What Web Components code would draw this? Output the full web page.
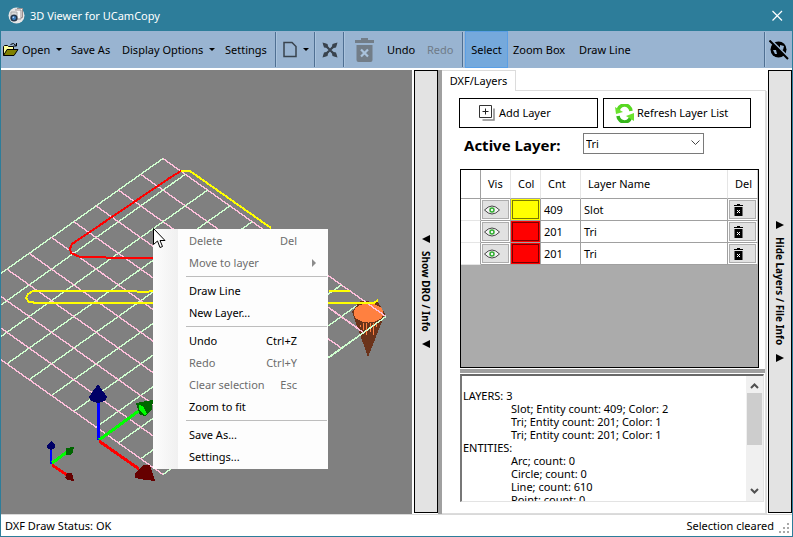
<!DOCTYPE html>
<html lang="en">
<head>
<meta charset="utf-8">
<title>3D Viewer for UCamCopy</title>
<style>
html,body{margin:0;height:100%}
body{font:11px/16px "Noto Sans","Open Sans",sans-serif;color:#000;background:#fff}
</style>
</head>
<body>
<viewer-window></viewer-window>
<script>
const define = (name, css, html, setup) => {
  const t = document.createElement('template');
  t.innerHTML = `<style>*{box-sizing:border-box}button{font:inherit;color:inherit;margin:0;padding:0;border:0;background:none}svg{display:block;flex:none}${css}</style>${html}`;
  customElements.define(name, class extends HTMLElement {
    constructor() {
      super();
      this.attachShadow({mode: 'open'}).append(t.content.cloneNode(true));
    }
    connectedCallback() { if (setup) setup(this, this.shadowRoot); }
  });
};

define('title-bar', `
:host{display:flex;align-items:center;gap:5px;height:31px;padding:0 7px;background:#2d7d9a;color:#fff;box-sizing:border-box}
h1{font:inherit;margin:0;flex:1}
button{width:16px;height:16px}`, `
<svg width="17" height="17" viewBox="0 0 17 17"><circle cx="8.500" cy="8.500" r="8" fill="#e6e6e6"/><path d="M7 3h6v9H9M9 1.500h5.500v9H13" fill="#f7f7f7" stroke="#9a8f8f"/><path d="M3 5h6v7H3z" fill="#ddd" stroke="#aaa"/><circle cx="6" cy="11" r="3.600" fill="#24364a"/><circle cx="6" cy="11" r="2" fill="#3d7fc0"/><circle cx="5.300" cy="10.300" r=".8" fill="#cdf"/></svg>
<h1><slot></slot></h1>
<button aria-label="Close"><svg width="16" height="16" viewBox="0 0 16 16"><path d="M3.500 3l9.500 9.500M13 3L3.500 12.500" stroke="#fff" stroke-width="1.200"/></svg></button>`);

define('tool-button', `
:host{display:flex}
button{display:flex;align-items:center;gap:3px;width:100%;height:37px;border:1px solid transparent;white-space:nowrap}
:host([selected]) button{background:#75a9dc;border-color:#5a9fe5}
:host([selected]) button,:host([center]) button{justify-content:center}
:host([disabled]) button{color:#6f7b88}
i{display:none;margin-left:3px;border:3px solid transparent;border-top-color:#000;border-bottom:0}
:host([menu]) i{display:block}`, `<button><slot></slot><i></i></button>`, (h, r) => {
  if (h.hasAttribute('disabled')) r.querySelector('button').disabled = true;
  if (h.title) r.querySelector('button').setAttribute('aria-label', h.title);
});

define('tool-bar', `
:host{display:flex;align-items:center;height:37px;background:#99b4d1}
hr{margin:0;width:2px;height:35px;border:0;border-left:1px solid #4f6f92;border-right:1px solid #aac3dd}
.space{flex:1}`, `
<tool-button menu style="width:69px"><svg width="17" height="16" viewBox="0 0 17 16"><path d="M1.500 13.500v-9l1-1h3l1 1h5v3" fill="#ffff9c" stroke="#000"/><path d="M1.500 13.500l3.500-6h11l-4 6z" fill="#808000" stroke="#000"/><path d="M8.500 2.500q3-2.500 5.500 1M14.500 1v3h-3" fill="none" stroke="#000"/></svg>Open</tool-button>
<tool-button style="width:51px">Save As</tool-button>
<tool-button menu style="width:103px">Display Options</tool-button>
<tool-button style="width:51px">Settings</tool-button>
<hr>
<tool-button menu center title="New" style="width:37px"><svg width="14" height="17" viewBox="0 0 14 17"><path d="M1 1.500h8l4 4v10H1z" fill="none" stroke="#39434e" stroke-width="1.500"/></svg></tool-button>
<hr>
<tool-button center title="Zoom to fit" style="width:27px"><svg width="16" height="16" viewBox="0 0 16 16"><path d="M2 2l12 12M14 2L2 14" stroke="#39434e" stroke-width="2.200"/><path d="M.5 .5L5.500 2 6.500 6 2 5.500zM15.500 .5L14 5.500 9.500 6.500 10.500 2zM.5 15.500L2 10.500 6.500 9.500 5.500 14zM15.500 15.500L10.500 14 9.500 9.500 14 10.500z" fill="#39434e"/></svg></tool-button>
<hr>
<tool-button center disabled title="Delete" style="width:39px"><svg width="19" height="24" viewBox="0 0 19 24"><path d="M0 2h6V0h7v2h6v3H0zM1.500 7h16v15q0 2-2 2h-12q-2 0-2-2z" fill="#727d88"/><path d="M6 11.500l7 7M13 11.500l-7 7" stroke="#a9c2dc" stroke-width="2.200"/></svg></tool-button>
<tool-button style="width:40px;margin-left:2px">Undo</tool-button>
<tool-button disabled style="width:36px">Redo</tool-button>
<hr>
<tool-button selected style="width:43px;margin:0 4px 0 1px">Select</tool-button>
<tool-button style="width:66px">Zoom Box</tool-button>
<tool-button style="width:60px">Draw Line</tool-button>
<div class="space"></div>
<hr>
<tool-button center title="Hide view" style="width:26px"><svg width="20" height="20" viewBox="0 0 20 20"><circle cx="9.500" cy="9.500" r="8" fill="#000"/><path d="M11 5l4 1-1 4-3-1zM4 10l3 0 1 4-2 0z" fill="#99b4d1"/><path d="M1.500-.5l19 19" stroke="#99b4d1" stroke-width="2"/><path d="M.5 .5l18.500 18.500" stroke="#000" stroke-width="2"/></svg></tool-button>`);

define('context-menu', `
:host{display:block;width:175px;padding:1px;background:linear-gradient(90deg,#fcfcfc 1px,#f0f0f0 25px,#fdfdfd 25px);box-sizing:border-box}
button{display:grid;grid-template-columns:1fr auto 30px;align-items:center;width:100%;height:22px;padding-left:35px;text-align:left;white-space:nowrap}
button:disabled{color:#6d6d6d}
hr{margin:2px 0 3px 32px;border:0;border-top:1px solid #bdbdbd}
i{justify-self:center;border:4px solid transparent;border-left:4px solid #8c8c8c;border-right:0;margin-left:4px}`, `
<button disabled>Delete<span>Del</span></button>
<button disabled>Move to layer<span></span><i></i></button>
<hr><button>Draw Line</button><button>New Layer...</button>
<hr><button>Undo<span>Ctrl+Z</span></button><button disabled>Redo<span>Ctrl+Y</span></button>
<button disabled>Clear selection<span>Esc</span></button><button>Zoom to fit</button>
<hr><button>Save As...</button><button>Settings...</button>`);

define('scene-view', `
:host{display:block;position:relative;background:#808080;overflow:hidden;border-top:1px solid #808080;box-sizing:border-box}
.scene{width:411px;height:443px}
context-menu{position:absolute;left:152px;top:158px}
.cursor{position:absolute;left:152px;top:157px}`, `
<svg class="scene" viewBox="1 71 411 443" shape-rendering="crispEdges" fill="none">
<g id="grid"></g>
<path d="M352 312l16 45 17-43-7-12-18-1z" fill="#6b331a"/>
<ellipse cx="368.500" cy="313" rx="15" ry="9.500" fill="#ff8040"/>
<path d="M363 323v7M366 323v12M370 323v9M373 323v12M376 323v4M360 325v2" stroke="#ff8040"/>
<g id="edge"></g>
<path d="M181 171l-10 6-99 67-2 5 1 4 9 4h20l12 1h42" stroke="#f00" stroke-width="2"/>
<path d="M181 172l1-1h8l81 57M154 291l-10 1-15-1H33l-5 3-2 4 3 4 9 1h336l4-3M329 291h21" stroke="#ff0" stroke-width="2"/>
<path d="M98.500 440V402" stroke="#00f" stroke-width="3"/><path d="M98 384l9 13-2 4-7 2-7-2-2-4z" fill="#006"/>
<path d="M99 440l41-30" stroke="#0f0" stroke-width="3"/><path d="M136 403l17-3-1 9-6 7-6-1z" fill="#060"/><path d="M139 405l4 1 4 8-3 1-5-6z" fill="#0f0"/>
<path d="M99 441l40 28" stroke="#f00" stroke-width="3"/><path d="M143 465h7l5 16-9-1-11-2v-5z" fill="#600"/>
<path d="M51 464v-18" stroke="#00f" stroke-width="2"/><path d="M51 441l4 4v3l-4 2-4-2v-3z" fill="#006"/>
<path d="M52 463l15-11" stroke="#0f0" stroke-width="3"/><path d="M66 448l8-1-1 5-3 3h-4z" fill="#060"/>
<path d="M52 465l15 10" stroke="#f00" stroke-width="3"/><path d="M67 473h5l2 8-6-1-3-2z" fill="#600"/>
</svg>
<context-menu></context-menu>
<svg class="cursor" width="13" height="21" viewBox="0 0 13 21"><path d="M.5 .5v16l4-3.500 2.500 6.500 2.500-1L7 12.500h5z" fill="#fff" stroke="#000"/></svg>`, (h, r) => {
  let s = '';
  for (let k = 0; k <= 10; k++) {
    const x = 22.3 * k, y = 15.8 * k;
    s += `<path stroke="#ffc0dc" stroke-width="1.400" d="M${163 - x} ${158.5 + y}l223 158"/><path stroke="#d0ffd0" stroke-width="1.400" d="M${163 + x} ${158.5 + y}l-223 158"/>`;
  }
  r.getElementById('grid').innerHTML = s;
  r.getElementById('edge').innerHTML = '<path stroke="#ffc0dc" stroke-width="1.400" d="M350 291l36 25.500M329 308l35 25"/><path stroke="#d0ffd0" stroke-width="1.400" d="M386 316.500l-57 41"/>';
});

define('side-tab', `
:host{display:block;width:24px;flex:none;border:1px solid #000;background:#e3e3e3;box-sizing:border-box}
button{display:flex;align-items:center;justify-content:center;gap:8px;width:22px;height:100%;writing-mode:vertical-rl;font:bold 10px/14px "Noto Sans","Open Sans",sans-serif}
i{border:4px solid transparent}
:host([dir=left]) i{border-right:8px solid #000;border-left:0}
:host([dir=right]) i{border-left:8px solid #000;border-right:0}`, `<button><i></i><slot></slot><i></i></button>`);

define('layer-table', `
:host{display:block;border:1px solid #000;background:#ababab;box-sizing:border-box}
table{width:100%;border-collapse:separate;border-spacing:0;table-layout:fixed;background:#fff;font-size:11px;line-height:14px}
th,td{padding:0 0 0 3px;height:22px;text-align:left;font-weight:normal;border-right:1px solid #a0a0a0;border-bottom:1px solid #a0a0a0}
tr>:last-child{border-right-color:#d0d0d0}
th{height:29px;padding-left:7px;border-right-color:#e5e5e5}
td:first-child{border-bottom-color:#e5e5e5}
td:first-child,th:first-child{border-right-color:#a0a0a0}
td.c{padding:1px}
td button{display:flex;align-items:center;width:100%;height:19px;padding-left:1px;background:#e1e1e1;border:1px solid #adadad}
td button.s{border-color:#0008}
td button.d{padding-left:4px}`, `
<table><colgroup><col style="width:20px"><col style="width:30px"><col style="width:30px"><col style="width:40px"><col><col style="width:30px"></colgroup>
<thead><tr><th></th><th>Vis</th><th>Col</th><th>Cnt</th><th>Layer Name</th><th>Del</th></tr></thead><tbody></tbody></table>`, (h, r) => {
  r.querySelector('tbody').innerHTML = [['#ff0', 409, 'Slot'], ['#f00', 201, 'Tri'], ['#f00', 201, 'Tri']].map(([c, n, t]) => `<tr><td></td>
<td class="c"><button aria-label="Visible"><svg width="16" height="12" viewBox="0 0 16 12"><path d="M.5 6Q8-2 15.500 6 8 14 .5 6z" fill="#f4f4f4" stroke="#444"/><circle cx="8" cy="6" r="2" fill="none" stroke="#2fae2f" stroke-width="1.500"/></svg></button></td>
<td class="c" style="background:${c}"><button class="s" aria-label="Colour" style="background:${c}"></button></td><td>${n}</td><td>${t}</td>
<td class="c"><button class="d" aria-label="Delete"><svg width="9" height="12" viewBox="0 0 9 12"><path d="M0 1h3V0h3v1h3v1H0zM.5 3h8v9h-8z"/><path d="M3 6l3 3M6 6L3 9" stroke="#fff"/></svg></button></td></tr>`).join('');
});

define('info-box', `
:host{display:flex;height:128px;border:2px solid #777;border-right:1px solid #e3e3e3;border-bottom:1px solid #e3e3e3;border-top-color:#696969;background:#fff;box-sizing:border-box}
textarea{flex:1;min-width:0;margin:0;border:0;padding:0 1px;resize:none;overflow:hidden;outline:0;background:none;color:inherit;white-space:pre;tab-size:48px;font:11px/13px "Noto Sans","Open Sans",sans-serif}
.bar{display:flex;flex-direction:column;align-items:center;width:17px;background:#f0f0f0;padding:6px 0}
.thumb{width:15px;height:52px;margin-top:2px;background:#cdcdcd}
.gap{flex:1}`, `
<textarea readonly aria-label="Drawing information"></textarea>
<div class="bar"><svg width="9" height="9" viewBox="0 0 9 9"><path d="M1 6l3.500-3.500L8 6" fill="none" stroke="#505050" stroke-width="2"/></svg><div class="thumb"></div><div class="gap"></div><svg width="9" height="9" viewBox="0 0 9 9"><path d="M1 3l3.500 3.500L8 3" fill="none" stroke="#505050" stroke-width="2"/></svg></div>`, (h, r) => {
  r.querySelector('textarea').value = '\nLAYERS: 3\n\tSlot; Entity count: 409; Color: 2\n\tTri; Entity count: 201; Color: 1\n\tTri; Entity count: 201; Color: 1\nENTITIES:\n\tArc; count: 0\n\tCircle; count: 0\n\tLine; count: 610\n\tPoint; count: 0';
});

define('layers-panel', `
:host{display:flex;flex-direction:column;background:#fff}
.tabs{display:flex;height:21px;border-bottom:1px solid #dcdcdc;margin-right:2px}
.tabs button{width:74px;height:21px;border:1px solid #dcdcdc;border-left:0;border-bottom:0;background:#fff;font-size:11px;padding:0}
.page{flex:1;display:flex;flex-direction:column;min-height:0;margin-right:1px;padding:7px 0 11px 17px;border-right:2px solid #dcdcdc;border-bottom:1px solid #dcdcdc}
.row{display:grid;grid-template-columns:139fr 148fr;gap:5px;margin-right:14px}
.row button{display:flex;align-items:center;gap:3px;height:30px;border:1px solid #000;padding-left:11px;white-space:nowrap}
.row button:first-child{padding-left:19px;gap:4px}
.active{display:flex;height:41px;padding-top:5px}
label{width:124px;padding:2px 0 0 5px;font:bold 15px/20px "Noto Sans","Open Sans",sans-serif;white-space:nowrap}
.sel{position:relative;width:121px;height:21px}
select{appearance:none;width:100%;height:21px;margin:0;padding:0 2px;border:1px solid #7a7a7a;border-radius:0;background:#fff;color:#000;font:11px/16px "Noto Sans","Open Sans",sans-serif}
.sel svg{position:absolute;right:4px;top:7px;pointer-events:none}
layer-table{flex:1;min-height:0;margin:0 6px 1px 1px}
.split{height:4px;margin:0 0 1px 1px;background:#a0a0a0}
info-box{margin:0 1px 0 1px}`, `
<div class="tabs"><button>DXF/Layers</button></div>
<div class="page">
<div class="row"><button><svg width="16" height="16" viewBox="0 0 16 16"><path d="M.5 .5h12v12H.5z" fill="#fff" stroke="#333"/><path d="M6.500 3.500v6M3.500 6.500h6" stroke="#222" stroke-width="1"/><path d="M15 3.500v11.500H3.500" fill="none" stroke="#888" stroke-width="1.500"/></svg>Add Layer</button>
<button><svg width="19" height="19" viewBox="0 0 19 19"><path d="M3 8a6.500 6.500 0 0 1 13-1" fill="none" stroke="#58d822" stroke-width="3.500"/><path d="M0 3l1 7 7-2z" fill="#6ae32e"/><path d="M16 11a6.500 6.500 0 0 1-13 1" fill="none" stroke="#36b71c" stroke-width="3.500"/><path d="M19 17V9l-8 3z" fill="#6ae32e"/></svg>Refresh Layer List</button></div>
<div class="active"><label for="al">Active Layer:</label><div class="sel"><select id="al"><option>Tri</option></select><svg width="9" height="6" viewBox="0 0 9 6"><path d="M.5 .5l4 4 4-4" fill="none" stroke="#444"/></svg></div></div>
<layer-table></layer-table><div class="split"></div><info-box></info-box>
</div>`);

define('status-bar', `
:host{display:flex;align-items:center;height:22px;padding:0 2px 0 4px;border-top:1px solid #d9d9d9;box-sizing:border-box;background:#fff}
.grow{flex:1}svg{margin:6px 0 0 5px}`, `
<span>DXF Draw Status: OK</span><span class="grow"></span><span>Selection cleared</span>
<svg width="11" height="11" viewBox="0 0 11 11"><path d="M8 0h2v2H8zM8 4h2v2H8zM8 8h2v2H8zM4 4h2v2H4zM4 8h2v2H4zM0 8h2v2H0z" fill="#a9a9a9"/></svg>`);

define('viewer-window', `
:host{display:flex;flex-direction:column;height:100vh;border:1px solid #2d7d9a;border-top:0;box-sizing:border-box;overflow:hidden}
main{flex:1;display:flex;min-height:0;padding-top:2px}
scene-view{flex:411;min-width:0}
layers-panel{flex:326;min-width:0}
.edge{width:2px;background:#fff}
.split{width:4px;background:#a0a0a0}
side-tab{margin-bottom:1px}`, `
<title-bar>3D Viewer for UCamCopy</title-bar>
<tool-bar></tool-bar>
<main>
<scene-view></scene-view><div class="edge"></div>
<side-tab dir="left">Show DRO / Info</side-tab><div class="split"></div>
<layers-panel></layers-panel>
<side-tab dir="right">Hide Layers / File Info</side-tab>
</main>
<status-bar></status-bar>`);
</script>
</body>
</html>
